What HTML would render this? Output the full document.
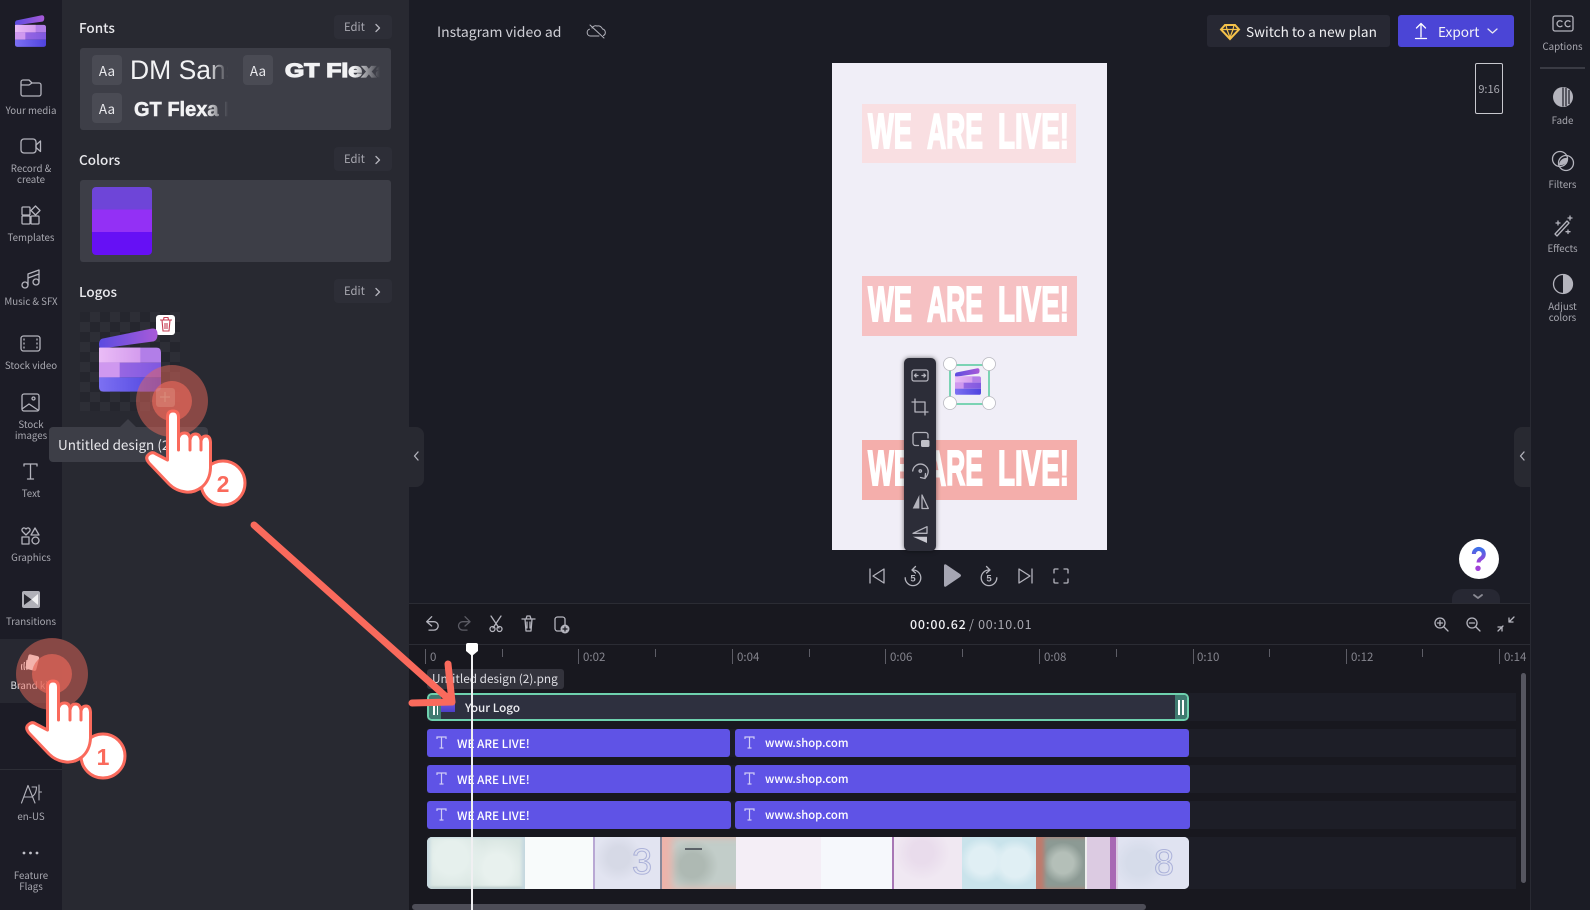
<!DOCTYPE html>
<html lang="en"><head><meta charset="utf-8"><title>Clipchamp Brand kit</title>
<style>
html,body{margin:0;padding:0;background:#1b1c25}
body{width:1590px;height:910px;position:relative;overflow:hidden;font-family:"Noto Sans CJK KR","Liberation Sans",sans-serif;color:#fff}
.a{position:absolute}
.t{position:absolute;white-space:nowrap;line-height:1}
.n{position:absolute;left:0;width:62px;text-align:center;font-size:9.7px;line-height:11px;color:#a8a8b0}
.r{position:absolute;left:1533px;width:59px;text-align:center;font-size:9.7px;line-height:11px;color:#a8a8b0}
.box{position:absolute;left:80px;width:311px;height:82px;background:#3d3e47;border-radius:3px}
.edit{position:absolute;left:334px;width:58px;height:24px;background:#2d2e37;border-radius:4px;color:#a8a8b0;font-size:11.3px;line-height:25px;text-indent:10px}
.h{position:absolute;left:79px;font-size:13.5px;line-height:16px;font-weight:500;color:#e8e8ec}
.aa{position:absolute;width:30px;height:30px;background:#4a4b54;border-radius:4px;color:#e8e8ec;font-size:13.5px;line-height:30px;text-align:center}
.track{position:absolute;left:427px;width:1089px;background:#1d1e27}
.clip{position:absolute;height:28px;background:#5f53e6;border-radius:3px;color:#fff;line-height:29px;font-weight:500}
.c1{font-size:11.7px}.c2{font-size:11.3px}
.tk{position:absolute;top:649px;width:1px;height:15px;background:#5d5d66}
.tm{position:absolute;top:649px;width:1px;height:8px;background:#5d5d66}
.tl{position:absolute;top:650px;font-size:11.5px;line-height:14px;color:#85858e}
.seg{position:absolute;top:0;height:52px}
.dg{position:absolute;font-size:36px;line-height:52px;top:0;color:transparent;-webkit-text-stroke:1px rgba(120,130,195,.5);font-family:"Liberation Sans",sans-serif}
svg{position:absolute;left:0;top:0}
.ic{fill:none;stroke:#b4b4bd;stroke-width:1.3;stroke-linecap:round;stroke-linejoin:round}
</style></head><body>

<!-- left nav -->
<div class="a" style="left:0;top:0;width:62px;height:910px;background:#1c1c26"></div>
<div class="a" style="left:0;top:639px;width:62px;height:64px;background:#272831"></div>
<div class="a" style="left:0;top:769px;width:62px;height:1px;background:#2d2e36"></div>
<div class="n" style="top:105px">Your media</div>
<div class="n" style="top:163px">Record &amp;<br>create</div>
<div class="n" style="top:232px">Templates</div>
<div class="n" style="top:296px">Music &amp; SFX</div>
<div class="n" style="top:360px">Stock video</div>
<div class="n" style="top:419px">Stock<br>images</div>
<div class="n" style="top:488px">Text</div>
<div class="n" style="top:552px">Graphics</div>
<div class="n" style="top:616px">Transitions</div>
<div class="n" style="top:680px;color:#e8e8ec">Brand kit</div>
<div class="n" style="top:811px">en-US</div>
<div class="n" style="top:870px">Feature<br>Flags</div>

<!-- panel -->
<div class="a" style="left:62px;top:0;width:347px;height:910px;background:#282931"></div>
<div class="a" style="left:409px;top:427px;width:15px;height:60px;background:#282931;border-radius:0 8px 8px 0"></div>
<div class="h" style="top:19px">Fonts</div><div class="edit" style="top:15px">Edit</div>
<div class="box" style="top:48px"></div>
<div class="aa" style="left:92px;top:55px">Aa</div>
<div class="aa" style="left:243px;top:55px">Aa</div>
<div class="aa" style="left:92px;top:93px">Aa</div>
<div class="a" style="left:130px;top:52px;width:98px;height:36px;overflow:hidden"><div class="t" style="left:0;top:3px;font:26.500px/30px 'Liberation Sans',sans-serif;color:#f2f2f4">DM Sans</div><div class="a" style="left:78px;top:0;width:20px;height:36px;background:linear-gradient(90deg,rgba(61,62,71,0),#3d3e47)"></div></div>
<div class="a" style="left:285px;top:52px;width:95px;height:36px;overflow:hidden"><div class="t" style="left:0;top:7px;font:bold 19.500px/24px 'Liberation Sans',sans-serif;color:#f2f2f4;-webkit-text-stroke:1.2px #f2f2f4;transform:scaleX(1.27);transform-origin:0 0">GT Flexa</div><div class="a" style="left:68px;top:0;width:27px;height:36px;background:linear-gradient(90deg,rgba(61,62,71,0),#3d3e47)"></div></div>
<div class="a" style="left:134px;top:90px;width:94px;height:36px;overflow:hidden"><div class="t" style="left:0;top:8px;font:bold 20px/24px 'Liberation Sans',sans-serif;color:#f2f2f4;-webkit-text-stroke:.5px #f2f2f4">GT Flexa Bold</div><div class="a" style="left:72px;top:0;width:22px;height:36px;background:linear-gradient(90deg,rgba(61,62,71,0),#3d3e47)"></div></div>

<div class="h" style="top:151px">Colors</div><div class="edit" style="top:147px">Edit</div>
<div class="box" style="top:180px"></div>
<div class="a" style="left:92px;top:187px;width:60px;height:68px;border-radius:4px;overflow:hidden;background:linear-gradient(#6e45d8 0 33%,#9330f5 33% 66.5%,#6610f5 66.5%)"></div>

<div class="h" style="top:283px">Logos</div><div class="edit" style="top:279px">Edit</div>
<div class="a" style="left:80px;top:312px;width:100px;height:99px;background:repeating-conic-gradient(#2d2e36 0 25%,#25262e 0 50%) 0 0/20px 20px"></div>
<div class="a" style="left:156px;top:315px;width:19px;height:20px;background:#fff;border-radius:3px"></div>

<!-- tooltip -->
<div class="a" style="left:49px;top:427px;width:159px;height:35px;background:#3d3e47;border-radius:4px"></div>
<div class="a" style="left:120px;top:419px;width:0;height:0;border-left:8px solid transparent;border-right:8px solid transparent;border-bottom:8px solid #3d3e47"></div>
<div class="t" style="left:58px;top:438px;font-size:13.500px;color:#e8e8ec">Untitled design (2</div>

<!-- top bar -->
<div class="t" style="left:437px;top:25px;font-size:14px;color:#cfcfd6">Instagram video ad</div>
<div class="a" style="left:1207px;top:15px;width:183px;height:32px;background:#272833;border-radius:3px"></div>
<div class="t" style="left:1246px;top:25px;font-size:13.600px;color:#f0f0f3">Switch to a new plan</div>
<div class="a" style="left:1398px;top:15px;width:116px;height:32px;background:#4b45d6;border-radius:3px"></div>
<div class="t" style="left:1438px;top:25px;font-size:13.600px;color:#f4f4f8">Export</div>
<div class="a" style="left:1475px;top:63px;width:26px;height:49px;border:1px solid #c8c8cf;border-radius:2px;color:#a8a8b0;font-size:11px;line-height:51px;text-align:center">9:16</div>

<!-- right rail -->
<div class="a" style="left:1530px;top:0;width:1px;height:910px;background:#292a33"></div>
<div class="a" style="left:1540px;top:67px;width:45px;height:2px;background:#3a3b44"></div>
<div class="r" style="top:41px">Captions</div>
<div class="r" style="top:115px">Fade</div>
<div class="r" style="top:179px">Filters</div>
<div class="r" style="top:243px">Effects</div>
<div class="r" style="top:301px">Adjust<br>colors</div>
<div class="a" style="left:1514px;top:427px;width:16px;height:60px;background:#282931;border-radius:8px 0 0 8px"></div>

<!-- video preview -->
<div class="a" style="left:832px;top:63px;width:275px;height:487px;background:#f0eef7"></div>
<div class="a" style="left:862px;top:104px;width:214px;height:59px;background:#f9dfe2"></div>
<div class="a" style="left:862px;top:276px;width:215px;height:60px;background:#f6c1c3"></div>
<div class="a" style="left:862px;top:440px;width:215px;height:60px;background:#f4aeab"></div>
<svg width="1590" height="910" style="pointer-events:none">
<g font-family="Liberation Sans,sans-serif" font-weight="bold" font-size="49.500" fill="#fff" stroke="#fff" stroke-width="2">
<text x="868" y="148" textLength="44" lengthAdjust="spacingAndGlyphs">WE</text>
<text x="927" y="148" textLength="56" lengthAdjust="spacingAndGlyphs">ARE</text>
<text x="998" y="148" textLength="71" lengthAdjust="spacingAndGlyphs">LIVE!</text>
<text x="868" y="321" textLength="44" lengthAdjust="spacingAndGlyphs">WE</text>
<text x="927" y="321" textLength="56" lengthAdjust="spacingAndGlyphs">ARE</text>
<text x="998" y="321" textLength="71" lengthAdjust="spacingAndGlyphs">LIVE!</text>
<text x="868" y="485" textLength="44" lengthAdjust="spacingAndGlyphs">WE</text>
<text x="927" y="485" textLength="56" lengthAdjust="spacingAndGlyphs">ARE</text>
<text x="998" y="485" textLength="71" lengthAdjust="spacingAndGlyphs">LIVE!</text>
</g></svg>
<div class="a" style="left:904px;top:358px;width:32px;height:193px;background:#2c2d38;border-radius:5px;box-shadow:0 0 5px rgba(0,0,0,.55)"></div>
<div class="a" style="left:949px;top:364px;width:37px;height:37px;border:2px solid #7bd3b4"></div>

<!-- timeline -->
<div class="a" style="left:409px;top:604px;width:1121px;height:306px;background:#18181f"></div>
<div class="a" style="left:409px;top:603px;width:1121px;height:1px;background:#2b2c34"></div>
<div class="a" style="left:409px;top:644px;width:1121px;height:1px;background:#2b2c34"></div>
<div class="a" style="left:1452px;top:589px;width:48px;height:14px;background:#272833;border-radius:10px 10px 0 0"></div>
<div class="t" style="left:910px;top:618px;font-size:12.500px;letter-spacing:.8px;color:#f0f0f3;font-weight:500">00:00.62</div>
<div class="t" style="left:969px;top:618px;font-size:12.500px;letter-spacing:.7px;color:#a8a8b0">/ 00:10.01</div>

<div class="tk" style="left:425px"></div><div class="tl" style="left:430px">0</div>
<div class="tm" style="left:502px"></div>
<div class="tk" style="left:578px"></div><div class="tl" style="left:583px">0:02</div>
<div class="tm" style="left:655px"></div>
<div class="tk" style="left:732px"></div><div class="tl" style="left:737px">0:04</div>
<div class="tm" style="left:809px"></div>
<div class="tk" style="left:885px"></div><div class="tl" style="left:890px">0:06</div>
<div class="tm" style="left:962px"></div>
<div class="tk" style="left:1039px"></div><div class="tl" style="left:1044px">0:08</div>
<div class="tm" style="left:1116px"></div>
<div class="tk" style="left:1193px"></div><div class="tl" style="left:1197px">0:10</div>
<div class="tm" style="left:1269px"></div>
<div class="tk" style="left:1346px"></div><div class="tl" style="left:1351px">0:12</div>
<div class="tm" style="left:1422px"></div>
<div class="tk" style="left:1499px"></div><div class="tl" style="left:1504px">0:14</div>

<div class="track" style="top:693px;height:28px"></div>
<div class="track" style="top:729px;height:28px"></div>
<div class="track" style="top:765px;height:28px"></div>
<div class="track" style="top:801px;height:28px"></div>
<div class="track" style="top:837px;height:52px"></div>

<div class="a" style="left:427px;top:693px;width:758px;height:24px;background:#2e303f;border:2px solid #6ed1ae;border-radius:5px;overflow:hidden">
  <div class="a" style="left:0;top:0;width:12px;height:24px;background:#3f7a70"></div>
  <div class="a" style="left:12px;top:6px;width:14px;height:11px;background:linear-gradient(#7a5ae0,#4b3fc8)"></div>
  <div class="a" style="right:0;top:0;width:12px;height:24px;background:#3f7a70"></div>
  <div class="a" style="left:4px;top:8px;width:1.5px;height:12px;background:#fff"></div>
  <div class="a" style="left:7.5px;top:8px;width:1.5px;height:12px;background:#fff"></div>
  <div class="a" style="right:3px;top:5px;width:2px;height:15px;background:#fff"></div>
  <div class="a" style="right:7px;top:5px;width:2px;height:15px;background:#fff"></div>
</div>
<div class="t" style="left:465px;top:702px;font-size:11.700px;font-weight:500;color:#ececf0">Your Logo</div>

<div class="clip c1" style="left:427px;top:729px;width:303px;text-indent:30px">WE ARE LIVE!</div>
<div class="clip c2" style="left:735px;top:729px;width:454px;text-indent:30px">www.shop.com</div>
<div class="clip c1" style="left:427px;top:765px;width:304px;text-indent:30px">WE ARE LIVE!</div>
<div class="clip c2" style="left:735px;top:765px;width:455px;text-indent:30px">www.shop.com</div>
<div class="clip c1" style="left:427px;top:801px;width:304px;text-indent:30px">WE ARE LIVE!</div>
<div class="clip c2" style="left:735px;top:801px;width:455px;text-indent:30px">www.shop.com</div>

<div class="a" style="left:427px;top:837px;width:762px;height:52px;border-radius:5px;overflow:hidden;background:#f8fbfb">
  <div class="seg" style="left:0;width:98px;background:radial-gradient(circle at 25% 40%,#e6f0ed 0 20%,transparent 45%),radial-gradient(circle at 72% 60%,#e8f1ee 0 18%,transparent 42%),#d8e5e1;box-shadow:inset 3px 0 3px #c5d8e0,inset -3px 0 3px #c5d8e0,inset 0 -2px 2px #b9c6c0"></div>
  <div class="seg" style="left:98px;width:68px;background:#f8fbfb"></div>
  <div class="seg" style="left:166px;width:67px;background:radial-gradient(circle at 35% 40%,#d6d9e6 0 20%,transparent 45%),#e2e4f1;border-left:2px solid #b9a8d4"></div>
  <div class="dg" style="left:205px;top:-1px">3</div>
  <div class="seg" style="left:233px;width:76px;background:radial-gradient(circle at 40% 55%,#aeb9b3 0 22%,transparent 48%),#c2cdc9;box-shadow:inset 10px 0 8px #eeb3aa;border-left:2px solid #889"></div>
  <div class="a" style="left:258px;top:11px;width:17px;height:2px;background:#5c6268"></div>
  <div class="seg" style="left:309px;width:85px;background:#f4eef6"></div>
  <div class="seg" style="left:394px;width:71px;background:#f6f8fc"></div>
  <div class="seg" style="left:465px;width:70px;background:radial-gradient(circle at 40% 30%,#e9dcec 0 20%,transparent 50%),#f0e8f2;border-left:2px solid #a877b5"></div>
  <div class="seg" style="left:535px;width:74px;background:radial-gradient(circle at 28% 45%,#e0eff4 0 22%,transparent 38%),radial-gradient(circle at 72% 50%,#e0eff4 0 24%,transparent 40%),#c9e3eb"></div>
  <div class="seg" style="left:609px;width:49px;background:radial-gradient(circle at 55% 50%,#b4bfb8 0 28%,transparent 55%),#8c9a94;box-shadow:inset 8px 0 4px #c07a6c"></div>
  <div class="seg" style="left:658px;width:33px;background:#dccbe2;border-left:2px solid #eee"></div>
  <div class="seg" style="left:683px;width:6px;background:#a868b4"></div>
  <div class="seg" style="left:691px;width:71px;background:radial-gradient(circle at 30% 50%,#d6dcea 0 22%,transparent 48%),#e0e3f1"></div>
  <div class="dg" style="left:727px;top:0">8</div>
</div>

<div class="a" style="left:427px;top:669px;width:137px;height:20px;background:#33333c;border-radius:3px"></div>
<div class="t" style="left:432px;top:673px;font-size:11.800px;color:#dfdfe5">Untitled design (2).png</div>

<div class="a" style="left:1521px;top:673px;width:5px;height:210px;background:#565660;border-radius:3px"></div>
<div class="a" style="left:412px;top:904px;width:734px;height:6px;background:#4d4d57;border-radius:3px"></div>
<div class="a" style="left:471px;top:650px;width:2px;height:260px;background:#f0f0f2"></div>

<!-- icon layer -->
<svg width="1590" height="910" viewBox="0 0 1590 910">
<defs>
<linearGradient id="lg1" x1="0" y1="0" x2="1" y2="0"><stop offset="0" stop-color="#5b4be0"/><stop offset="1" stop-color="#a85ad8"/></linearGradient>
<linearGradient id="lg2" x1="0" y1="0" x2="1" y2="0"><stop offset="0" stop-color="#7c70f2"/><stop offset="1" stop-color="#4f43de"/></linearGradient>
<linearGradient id="lg3" x1="0" y1="0" x2="1" y2="0"><stop offset="0" stop-color="#eabcf6"/><stop offset="1" stop-color="#d49cee"/></linearGradient>
<linearGradient id="lg4" x1="0" y1="0" x2="1" y2="0"><stop offset="0" stop-color="#a26ee4"/><stop offset="1" stop-color="#8058e0"/></linearGradient>
<linearGradient id="gq" x1="0" y1="0" x2="0" y2="1"><stop offset="0" stop-color="#3f6fe8"/><stop offset="1" stop-color="#a03fd8"/></linearGradient>
<symbol id="logo" viewBox="298 985 186 190">
<path d="M298 1030Q300 1018 308 1016L455 986Q470 983 473 996Q476 1020 462 1024L310 1045Q298 1047 298 1035Z" fill="url(#lg1)"/>
<path d="M298 1043H470Q484 1043 484 1057V1088H298Z" fill="#b27ee8"/>
<path d="M298 1043H422V1088H298Z" fill="url(#lg3)"/>
<path d="M298 1088H484V1132H298Z" fill="url(#lg4)"/>
<path d="M298 1088H360V1132H298Z" fill="#cf98ef"/>
<path d="M298 1132H484V1161Q484 1175 470 1175H312Q298 1175 298 1161Z" fill="url(#lg2)"/>
</symbol>
</defs>
<use href="#logo" x="15" y="15" width="31" height="32"/>
<use href="#logo" x="99" y="328" width="62" height="64"/>
<use href="#logo" x="955" y="368" width="26" height="27"/>

<g class="ic">
<path d="M21 82a2 2 0 0 1 2-2h6l3 3h7a2 2 0 0 1 2 2v9a2 2 0 0 1-2 2H23a2 2 0 0 1-2-2zM21 85h8l3-2"/>
<rect x="21" y="139" width="15" height="14" rx="3"/><path d="M36 145l4.500-4v10.500l-4.500-4z"/>
<rect x="22" y="207" width="8" height="8" rx="1"/><rect x="22" y="216" width="8" height="8" rx="1"/><rect x="31" y="216" width="8" height="8" rx="1"/><path d="M35.500 206l4.500 4.500-4.500 4.500-4.500-4.500z"/>
<circle cx="25" cy="285" r="3"/><circle cx="36" cy="282" r="3"/><path d="M28 285V274L39 270V282M28 278L39 274"/>
<rect x="21" y="336" width="19" height="15" rx="2.500"/><path d="M24 339v1M24 343v1M24 347v1M37 339v1M37 343v1M37 347v1"/>
<rect x="22" y="394" width="17" height="17" rx="2"/><path d="M22 409l7-5 3 2M29 404l9 6"/><circle cx="33.500" cy="398.500" r="1.500"/>
<path d="M24 466V464H37V466M30.500 464V479M27.500 479H33.500"/>
<path d="M26 535l-3.500-3.500c-2-2.500 1.500-5 3.500-2.500 2-2.500 5.500 0 3.500 2.500z"/><path d="M35 528l4 7h-8z"/><rect x="22" y="537" width="7" height="7"/><circle cx="35.500" cy="540.500" r="3.500"/>
<path d="M21.500 803L28 785.500 35 803M24 797H32M32 787h4.500q0 6-3.500 9M39 785v15M39 792h2.500" stroke-width="1.100"/>
<!-- top -->
<path d="M592 28a4 4 0 0 1 5-2 4.500 4.500 0 0 1 5.500 3 3.500 3.500 0 0 1 1 6.500M599 36h-8.500a3.500 3.500 0 0 1-1-6.800M590 25l14 13" stroke-width="1"/>
<path d="M1421 24v13M1416.500 28l4.500-4.500 4.500 4.500M1415.500 38.500h11" stroke="#fff" />
<path d="M1488 29l4.500 4 4.500-4" stroke="#e8e8f0"/>
<!-- edit chevrons -->
<path d="M376 24.500l3.500 3.500-3.500 3.500M376 156.500l3.500 3.500-3.500 3.500M376 288.500l3.500 3.500-3.500 3.500"/>
<path d="M418 452l-3.500 4 3.500 4M1524 452l-3.500 4 3.500 4"/>
<!-- right icons -->
<g transform="translate(1 0)">
<rect x="1552" y="16" width="20" height="15" rx="2"/>
<path d="M1561 21.500a3 3 0 1 0 0 4.500M1569 21.500a3 3 0 1 0 0 4.500" />
<circle cx="1559" cy="159" r="7.500"/><circle cx="1565" cy="163" r="7.500"/>
<path d="M1554 234l12-13 2 2-12 13z"/>
<path d="M1557 221v4M1555 223h4M1569 216v4M1567 218h4M1567 230v3.500M1565 231.700h4" />
<circle cx="1562" cy="284" r="9.500"/>
</g>
<!-- toolbar icons -->
<rect x="912" y="370" width="16" height="11" rx="2"/>
<path d="M915 375.500h3M925 375.500h-3M916 374l-1.500 1.500 1.500 1.500M924 374l1.500 1.500-1.500 1.500"/>
<path d="M915 399v13h13M912 402h13v13"/>
<path d="M913 443v-8a2.500 2.500 0 0 1 2.500-2.500h10a2.500 2.500 0 0 1 2.500 2.500v3M913 443a2.500 2.500 0 0 0 2.500 2.500h3"/>
<circle cx="920.300" cy="471" r="1.200"/><path d="M912.700 471a7.800 7.800 0 0 1 15.500 0q0 4-3 7M925.500 473.500l-.500 5-4.500-1"/>
<path d="M922 495V508.500H928.300z"/>
<path d="M913 533.300L927 526.700V533.300z"/>
<!-- playback -->
<path d="M870 569v14M884 569l-11 7 11 7z"/>
<path d="M913 570a7.800 7.800 0 1 1-7.800 7.800M915.500 566.500l-3.500 3.500 3.500 3M989 570a7.800 7.800 0 1 0 7.800 7.800M986.500 566.500l3.500 3.500-3.500 3"/>
<path d="M1032 569v14M1019 569l11 7-11 7z"/>
<path d="M1054 573v-3a1 1 0 0 1 1-1h3M1068 573v-3a1 1 0 0 0-1-1h-3M1054 579v3a1 1 0 0 0 1 1h3M1068 579v3a1 1 0 0 1-1 1h-3"/>
<!-- timeline tools -->
<path d="M431.700 616.700L426.700 621.700 431.700 626M426.700 621.700H434a4.200 4.200 0 0 1 0 8.400H429"/>
<g stroke="#5b5b64"><path d="M465 616.700L470 621.700 465 626M470 621.700H462.700a4.200 4.200 0 0 0 0 8.400H467"/></g>
<path d="M491 616l8 12M501 616l-8 12"/><circle cx="492.500" cy="629" r="2.500"/><circle cx="499.500" cy="629" r="2.500"/>
<path d="M522 619h13M525 619l1 12h5l1-12M526 619l1-3h3l1 3M527 622v6M530 622v6"/>
<rect x="555" y="617" width="10" height="14" rx="2.500"/>
<circle cx="1440" cy="623" r="5"/><path d="M1437.500 623h5M1440 620.500v5M1444 627l4 4"/>
<circle cx="1472" cy="623" r="5"/><path d="M1469.500 623h5M1476 627l4 4"/>
<path d="M1514 617l-5 5M1509 618v4h4M1503 626l-5 5M1498 627h4v4"/>
<path d="M1474 595l4 3 4-3" stroke-width="1.800" stroke="#8a8a93"/>
</g>
<g font-family="Liberation Sans,sans-serif" font-weight="bold" font-size="9.500" fill="#b4b4bd" text-anchor="middle"><text x="913" y="581.500">5</text><text x="989" y="581.500">5</text></g>
<!-- filled icons -->
<rect x="22" y="591" width="18" height="17" rx="2" fill="#b0b0b8"/>
<path d="M24 594l7.500 5.500-7.500 5.500z" fill="#26262e"/><path d="M38 594l-6.500 5.500 6.500 5.500z" fill="#f0f0f2"/>
<circle cx="24" cy="853" r="1.400" fill="#c0c0c8"/><circle cx="30.500" cy="853" r="1.400" fill="#c0c0c8"/><circle cx="37" cy="853" r="1.400" fill="#c0c0c8"/>
<g transform="translate(1 0)">
<circle cx="1562" cy="97" r="10" fill="#b4b4bd"/><path d="M1562 87.500v19M1565 88v18M1568 90v14" stroke="#1b1c25" stroke-width="1.200"/>
<path d="M1562 274.500a9.500 9.500 0 0 1 0 19z" fill="#b4b4bd"/>
<path d="M1558 165a7.500 7.500 0 0 1 9-7 7.500 7.500 0 0 1-9 7z" fill="#b4b4bd"/>
</g>
<rect x="921" y="440" width="8.500" height="7" rx="1.500" fill="#c0c0c8"/>
<path d="M919.300 495V508.500H912.700z" fill="#b4b4bd"/>
<path d="M913 536.700H927V543z" fill="#c8c8d0"/>
<path d="M944 566q0-2.500 2-1.500l14 9.500q2 1.500 0 3l-14 9.500q-2 1-2-1.500z" fill="#a6a6b3"/>
<circle cx="565" cy="629" r="4.500" fill="#b4b4bd"/><path d="M562.500 629h5M565 626.500v5" stroke="#18181f" stroke-width="1.200"/>
<!-- clip T icons -->
<g fill="none" stroke="#cfcbf6" stroke-width="1.200">
<path d="M437 739v-2h9v2M441.500 737v11M439.500 748h4"/>
<path d="M437 775v-2h9v2M441.500 773v11M439.500 784h4"/>
<path d="M437 811v-2h9v2M441.500 809v11M439.500 820h4"/>
<path d="M745 739v-2h9v2M749.500 737v11M747.500 748h4"/>
<path d="M745 775v-2h9v2M749.500 773v11M747.500 784h4"/>
<path d="M745 811v-2h9v2M749.500 809v11M747.500 820h4"/>
</g>
<!-- gem -->
<path d="M1225 25h10l4 4.500-9 9.500-9-9.500z" fill="none" stroke="#f5c24a" stroke-width="2"/><path d="M1221 29.500h18M1227 29.500l3 8 3-8M1226 25l1 4.500M1234 25l-1 4.500" stroke="#f5c24a" stroke-width="1.200" fill="none"/>
<!-- trash red -->
<path d="M160 320h12M162 320l1 11h6l1-11M163.500 320l.5-2.500h4l.5 2.500M165 323v6M167 323v6" fill="none" stroke="#c63d52" stroke-width="1.100"/>
<!-- handles -->
<g fill="#fff" stroke="#b9b9c0" stroke-width=".8"><circle cx="950" cy="364" r="6.500"/><circle cx="989" cy="364" r="6.500"/><circle cx="950" cy="403" r="6.500"/><circle cx="989" cy="403" r="6.500"/></g>
<!-- help -->
<circle cx="1479" cy="559" r="20" fill="#fff"/>
<path d="M1473.800 554a5 5 0 1 1 8 4q-3.300 2-3.300 4.500" fill="none" stroke="url(#gq)" stroke-width="4" stroke-linecap="butt"/>
<circle cx="1478" cy="568.300" r="2.700" fill="#a03fd8"/>
<!-- playhead marker -->
<path d="M466 645q0-2 2-2h8q2 0 2 2v6l-6 5-6-5z" fill="#fff"/>
<!-- brand kit icon -->
<path d="M22 664q-1 3 0 6M24.500 662q-1 4 0 8M27 660q-1 5 0 10" fill="none" stroke="#fff" stroke-width="1.100"/>
<rect x="27" y="655" width="11" height="15" rx="2" fill="#fff" transform="rotate(14 32 662)"/>

<!-- tap effects -->
<circle cx="172" cy="401" r="36" fill="#e8675a" fill-opacity=".5"/>
<circle cx="172" cy="401" r="20" fill="#e8675a" fill-opacity=".68"/>
<circle cx="52" cy="674" r="36" fill="#e8675a" fill-opacity=".5"/>
<circle cx="52" cy="674" r="20" fill="#e8675a" fill-opacity=".68"/>
<rect x="156" y="388" width="19" height="19" rx="3" fill="#eeb3a3" fill-opacity=".28"/>
<path d="M160 397h10M165 392v10" stroke="#d98a7a" stroke-width="1.200"/>

<!-- numbered badges -->
<g fill="#fff" stroke="#fa6a5c" stroke-width="3"><circle cx="103" cy="756" r="22"/><circle cx="223" cy="483" r="22"/></g>
<g font-family="Liberation Sans,sans-serif" font-weight="bold" font-size="23" fill="#fa6a5c" text-anchor="middle"><text x="103" y="765">1</text><text x="223" y="492">2</text></g>

<!-- hands -->
<g fill="#fff" stroke="#fa6a5c" stroke-width="3" stroke-linejoin="round" stroke-linecap="round">
<path d="M47.500 730V687Q47.500 681 53 681T58.500 687V708Q60 703 64.500 703T70 708V710Q71 704 75.500 704T81 710V711Q82 706 86 706T90.500 712V738Q90 750 82 757 74 763 66 762 56 761 49 754L29 733Q25 728 28 725 32 721 36 724z"/>
<path d="M58.500 708V720M70 710V720M81 711V720" fill="none"/>
</g>
<g fill="#fff" stroke="#fa6a5c" stroke-width="3" stroke-linejoin="round" stroke-linecap="round" transform="translate(120 -270)">
<path d="M47.500 730V687Q47.500 681 53 681T58.500 687V708Q60 703 64.500 703T70 708V710Q71 704 75.500 704T81 710V711Q82 706 86 706T90.500 712V738Q90 750 82 757 74 763 66 762 56 761 49 754L29 733Q25 728 28 725 32 721 36 724z"/>
<path d="M58.500 708V720M70 710V720M81 711V720" fill="none"/>
</g>

<!-- arrow -->
<path d="M254 525L452 702" stroke="#fa6a5c" stroke-width="7" stroke-linecap="round" fill="none"/>
<path d="M448 664L452 702 412 703" stroke="#fa6a5c" stroke-width="7" stroke-linecap="round" stroke-linejoin="round" fill="none"/>
</svg>
</body></html>
